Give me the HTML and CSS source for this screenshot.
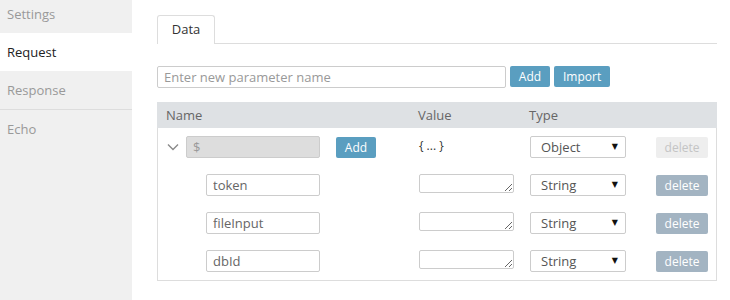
FILE: index.html
```html
<!DOCTYPE html>
<html lang="en">
<head>
    <meta charset="UTF-8">
    <title>Request</title>
    <link rel="stylesheet" href="styles.css">
</head>
<body>
    <div class="layout">
        <aside class="sidebar">
            <div class="nav-item">Settings</div>
            <div class="nav-item active">Request</div>
            <div class="nav-item">Response</div>
            <div class="nav-divider"></div>
            <div class="nav-item">Echo</div>
        </aside>

        <main class="content">
            <div class="tabs">
                <div class="tab active">Data</div>
            </div>

            <div class="new-param">
                <input type="text" class="text-input param-input" placeholder="Enter new parameter name">
                <button class="btn">Add</button>
                <button class="btn">Import</button>
            </div>

            <div class="params">
                <div class="params-row params-head">
                    <div class="cell">Name</div>
                    <div class="cell">Value</div>
                    <div class="cell">Type</div>
                    <div class="cell"></div>
                </div>

                <div class="params-row">
                    <div class="cell name-cell">
                        <svg class="chevron" width="12" height="8" viewBox="0 0 12 8">
                            <polyline points="1,1.5 6,6.5 11,1.5" fill="none" stroke="#8a8a8a" stroke-width="1.4"/>
                        </svg>
                        <input type="text" class="text-input root-input" value="$" disabled>
                        <button class="btn btn-add">Add</button>
                    </div>
                    <div class="cell object-value">{ ... }</div>
                    <div class="cell">
                        <div class="select-box">Object</div>
                    </div>
                    <div class="cell action-cell">
                        <button class="btn-delete disabled">delete</button>
                    </div>
                </div>

                <div class="params-row">
                    <div class="cell child-cell">
                        <input type="text" class="text-input child-input" value="token">
                    </div>
                    <div class="cell"><textarea class="value-input"></textarea></div>
                    <div class="cell"><div class="select-box">String</div></div>
                    <div class="cell action-cell"><button class="btn-delete">delete</button></div>
                </div>

                <div class="params-row">
                    <div class="cell child-cell">
                        <input type="text" class="text-input child-input" value="fileInput">
                    </div>
                    <div class="cell"><textarea class="value-input"></textarea></div>
                    <div class="cell"><div class="select-box">String</div></div>
                    <div class="cell action-cell"><button class="btn-delete">delete</button></div>
                </div>

                <div class="params-row">
                    <div class="cell child-cell">
                        <input type="text" class="text-input child-input" value="dbId">
                    </div>
                    <div class="cell"><textarea class="value-input"></textarea></div>
                    <div class="cell"><div class="select-box">String</div></div>
                    <div class="cell action-cell"><button class="btn-delete">delete</button></div>
                </div>
            </div>
        </main>
    </div>
</body>
</html>
```

FILE: styles.css
```css
:root {
    --sidebar-bg: #f0f0f0;
    --border: #dddddd;
    --input-border: #cccccc;
    --head-bg: #dee1e4;
    --blue: #5a9ec0;
    --grey-btn: #a3b4c2;
    --text: #333333;
    --text-light: #999999;
}

* {
    box-sizing: border-box;
    margin: 0;
    padding: 0;
}

body {
    font-family: 'Open Sans', sans-serif;
    font-size: 13px;
    color: var(--text);
    background: #ffffff;
    overflow: hidden;
}

.layout {
    display: flex;
    height: 300px;
}

/* Sidebar */
.sidebar {
    width: 132px;
    flex-shrink: 0;
    background: var(--sidebar-bg);
    margin-top: -5px;
}

.nav-item {
    height: 38px;
    line-height: 38px;
    padding-left: 7px;
    color: var(--text-light);
}

.nav-item.active {
    background: #ffffff;
    color: #222222;
}

.nav-divider {
    height: 1px;
    background: var(--border);
}

/* Main */
.content {
    padding: 15px 0 0 25px;
    width: 585px;
}

.tabs {
    display: flex;
    border-bottom: 1px solid var(--border);
}

.tab {
    width: 58px;
    height: 29px;
    line-height: 27px;
    text-align: center;
    border: 1px solid var(--border);
    border-bottom: none;
    border-radius: 3px 3px 0 0;
    margin-bottom: -1px;
    background: #ffffff;
    color: #333333;
}

.new-param {
    display: flex;
    align-items: flex-start;
    gap: 4px;
    margin-top: 22px;
}

.text-input {
    font-family: 'Open Sans', sans-serif;
    font-size: 13px;
    height: 22px;
    border: 1px solid var(--input-border);
    border-radius: 2px;
    padding: 0 6px;
    color: #666666;
    outline: none;
}

.text-input::placeholder {
    color: #999999;
}

.param-input {
    width: 349px;
}

.btn {
    font-family: 'Open Sans', sans-serif;
    font-size: 12px;
    height: 21px;
    padding: 0 9px;
    border: none;
    border-radius: 2px;
    background: var(--blue);
    color: #ffffff;
}

.new-param .btn:first-of-type {
    width: 40px;
    padding: 0;
}

/* Params table */
.params {
    margin-top: 14px;
    border: 1px solid var(--border);
    border-top: none;
    width: 560px;
}

.params-row {
    display: grid;
    grid-template-columns: 253px 111px 120px 1fr;
    height: 38px;
    align-items: center;
}

.params-head {
    height: 26px;
    background: var(--head-bg);
    margin: 0 -1px;
    color: #666666;
}

.params-head .cell:first-child {
    padding-left: 9px;
}

.cell {
    padding-left: 8px;
    display: flex;
    align-items: center;
}

.name-cell {
    padding-left: 9px;
}

.chevron {
    margin-right: 7px;
}

.root-input {
    width: 134px;
    background: #dddddd;
    color: #999999;
}

.btn-add {
    width: 40px;
    padding: 0;
    margin-left: 16px;
}

.child-cell {
    padding-left: 48px;
}

.child-input {
    width: 114px;
}

.object-value {
    font-size: 12px;
    padding-bottom: 3px;
}

.value-input {
    width: 95px;
    height: 19px;
    border: 1px solid var(--input-border);
    border-radius: 2px;
    margin-top: -3px;
    resize: both;
    outline: none;
}

.select-box {
    position: relative;
    width: 96px;
    height: 22px;
    line-height: 20px;
    border: 1px solid var(--input-border);
    border-radius: 2px;
    padding-left: 10px;
    color: #555555;
}

.select-box::after {
    content: "\25BC";
    position: absolute;
    right: 7px;
    top: 0;
    font-size: 8px;
    color: #111111;
    font-family: 'DejaVu Sans', sans-serif;
}

.action-cell {
    justify-content: flex-end;
    padding-right: 8px;
}

.btn-delete {
    font-family: 'Open Sans', sans-serif;
    font-size: 12px;
    width: 52px;
    height: 21px;
    border: none;
    border-radius: 2px;
    background: var(--grey-btn);
    color: #ffffff;
}

.btn-delete.disabled {
    background: #eeeeee;
    color: #c4c4c4;
}
```
